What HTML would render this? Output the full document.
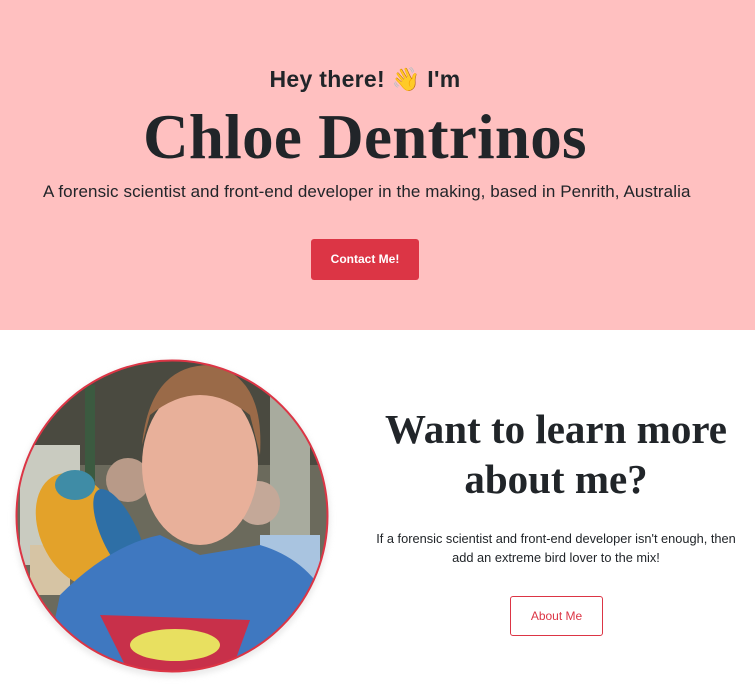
<!DOCTYPE html>
<html><head><style>
body{margin:0;width:755px;height:696px;overflow:hidden;font-family:"Liberation Sans",sans-serif;color:#212529;background:#fff}
.hero{position:absolute;left:0;top:0;width:755px;height:330px;background:#ffc0c0}
.abs{position:absolute;white-space:nowrap}
</style></head><body>
<div class="hero">
<div class="abs" style="left:0;width:730px;text-align:center;top:66px;font-weight:bold;font-size:23px;letter-spacing:0.3px">Hey there! 👋 I'm</div>
<div class="abs" style="left:0;width:730px;text-align:center;top:101px;font-family:'Liberation Serif',serif;font-weight:bold;font-size:63px;letter-spacing:0.3px">Chloe Dentrinos</div>
<div class="abs" style="left:43px;top:182px;font-size:17px;letter-spacing:0.1px">A forensic scientist and front-end developer in the making, based in Penrith, Australia</div>
<div class="abs" style="left:311px;top:239px;width:108px;height:41px;background:#dc3545;border-radius:3px;color:#fff;font-size:12px;font-weight:bold;text-align:center;line-height:41px">Contact Me!</div>
</div>
<svg class="abs" style="left:0;top:345px" width="345" height="345">
<defs><clipPath id="c"><circle cx="172" cy="171" r="155"/></clipPath>
<filter id="b"><feGaussianBlur stdDeviation="3"/></filter></defs>
<circle cx="172" cy="174" r="158" fill="#ddd" filter="url(#b)" opacity=".6"/>
<g clip-path="url(#c)">
<rect width="345" height="345" fill="#6b6a5c"/>
<rect x="0" y="0" width="345" height="120" fill="#4a4a40"/>
<rect x="20" y="100" width="60" height="120" fill="#c9cbc0"/>
<rect x="85" y="40" width="10" height="200" fill="#3b5a40"/>
<rect x="270" y="50" width="40" height="180" fill="#a8ab9e"/>
<rect x="30" y="200" width="40" height="50" fill="#d6c4a4"/>
<circle cx="128" cy="135" r="22" fill="#b89a88"/>
<circle cx="258" cy="158" r="22" fill="#c4a898"/>
<rect x="260" y="190" width="60" height="60" fill="#a9c4e0"/>
<ellipse cx="80" cy="185" rx="40" ry="60" fill="#e3a22a" transform="rotate(-25 80 185)"/>
<ellipse cx="75" cy="140" rx="20" ry="15" fill="#3f8ca6"/>
<ellipse cx="120" cy="190" rx="18" ry="50" fill="#2e6fa6" transform="rotate(-25 120 190)"/>
<ellipse cx="200" cy="120" rx="58" ry="80" fill="#e8b09a"/>
<path d="M142 100 Q150 20 210 20 Q265 30 260 110 L250 70 Q200 30 150 70Z" fill="#9a6a48"/>
<path d="M40 345 L60 250 Q110 200 160 190 L200 210 L260 200 Q310 215 330 260 L345 345Z" fill="#3f78c0"/>
<path d="M100 270 L250 275 L230 330 L130 330Z" fill="#c8304a"/>
<ellipse cx="175" cy="300" rx="45" ry="16" fill="#e8e060"/>
</g>
<circle cx="172" cy="171" r="155.5" fill="none" stroke="#dc3545" stroke-width="2"/>
</svg>
<div class="abs" style="left:356px;width:400px;text-align:center;top:404px;font-family:'Liberation Serif',serif;font-weight:bold;font-size:41px;line-height:50px">Want to learn more<br>about me?</div>
<div class="abs" style="left:356px;width:400px;text-align:center;top:529px;font-size:12.8px;line-height:19px">If a forensic scientist and front-end developer isn't enough, then<br>add an extreme bird lover to the mix!</div>
<div class="abs" style="left:510px;top:596px;width:91px;height:38px;border:1px solid #dc3545;border-radius:3px;color:#dc3545;font-size:12px;text-align:center;line-height:38px">About Me</div>
</body></html>
